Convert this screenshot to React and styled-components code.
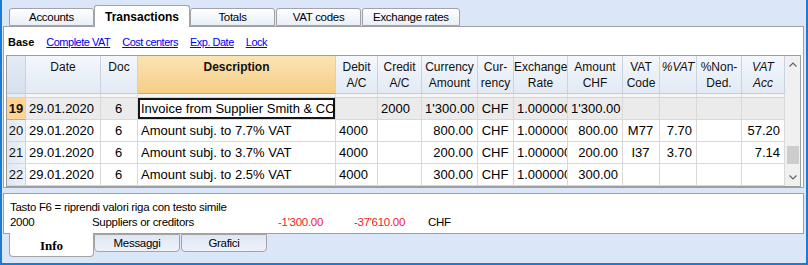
import React from 'react';
import styled, { createGlobalStyle } from 'styled-components';

const GlobalStyle = createGlobalStyle`
  html, body { margin: 0; padding: 0; background: #dbe6f8; }
  body { font-family: "Liberation Sans", Arial, sans-serif; }
  * { box-sizing: border-box; }
`;

const COLS = [19, 75, 37, 198, 42, 44, 56, 36, 54, 55, 37, 37, 45, 43];
const TEMPLATE = COLS.map((w) => `${w}px`).join(' ');

const HEADERS = [
  { lines: [''] },
  { lines: ['Date'] },
  { lines: ['Doc'] },
  { lines: ['Description'], accent: true },
  { lines: ['Debit', 'A/C'] },
  { lines: ['Credit', 'A/C'] },
  { lines: ['Currency', 'Amount'] },
  { lines: ['Cur-', 'rency'] },
  { lines: ['Exchange', 'Rate'] },
  { lines: ['Amount', 'CHF'] },
  { lines: ['VAT', 'Code'] },
  { lines: ['%VAT'], italic: true },
  { lines: ['%Non-', 'Ded.'] },
  { lines: ['VAT', 'Acc', 'CHF'], italic: true },
];

const FIELDS = [
  { key: 'date', align: 'left' },
  { key: 'doc', align: 'center' },
  { key: 'desc', align: 'left' },
  { key: 'debit', align: 'left' },
  { key: 'credit', align: 'left' },
  { key: 'curAmt', align: 'right' },
  { key: 'cur', align: 'center' },
  { key: 'rate', align: 'left' },
  { key: 'chf', align: 'right' },
  { key: 'code', align: 'center' },
  { key: 'pct', align: 'right' },
  { key: 'nonDed', align: 'right' },
  { key: 'acc', align: 'right' },
];

const ROWS = [
  { n: 19, current: true, date: '29.01.2020', doc: '6', desc: 'Invoice from Supplier Smith & CO', debit: '', credit: '2000', curAmt: "1'300.00", cur: 'CHF', rate: '1.000000', chf: "1'300.00", code: '', pct: '', nonDed: '', acc: '' },
  { n: 20, date: '29.01.2020', doc: '6', desc: 'Amount subj. to 7.7% VAT', debit: '4000', credit: '', curAmt: '800.00', cur: 'CHF', rate: '1.000000', chf: '800.00', code: 'M77', pct: '7.70', nonDed: '', acc: '57.20' },
  { n: 21, date: '29.01.2020', doc: '6', desc: 'Amount subj. to 3.7% VAT', debit: '4000', credit: '', curAmt: '200.00', cur: 'CHF', rate: '1.000000', chf: '200.00', code: 'I37', pct: '3.70', nonDed: '', acc: '7.14' },
  { n: 22, date: '29.01.2020', doc: '6', desc: 'Amount subj. to 2.5% VAT', debit: '4000', credit: '', curAmt: '300.00', cur: 'CHF', rate: '1.000000', chf: '300.00', code: '', pct: '', nonDed: '', acc: '' },
];

const TABS = ['Accounts', 'Transactions', 'Totals', 'VAT codes', 'Exchange rates'];
const LINKS = ['Complete VAT', 'Cost centers', 'Exp. Date', 'Lock'];

const Frame = styled.div`
  width: 808px;
  height: 265px;
  background: #dbe6f8;
  border: 2px solid #1a7ad6;
  border-top: none;
  padding: 0 2px 0 1px;
  display: flex;
  flex-direction: column;
  overflow: hidden;
`;

const TabStrip = styled.div`
  height: 26px;
  display: flex;
  align-items: flex-end;
  gap: 1px;
  padding-left: 6px;
  position: relative;
  z-index: 1;
`;

const Tab = styled.div`
  min-width: ${(p) => (p.$active ? '87px' : '85px')};
  height: ${(p) => (p.$active ? '22px' : '18px')};
  margin: ${(p) => (p.$active ? '0 -1px -1px -1px' : '0')};
  padding: 0 10px;
  display: flex;
  align-items: center;
  justify-content: center;
  font-size: ${(p) => (p.$active ? '12px' : '11.5px')};
  font-weight: ${(p) => (p.$active ? 'bold' : 'normal')};
  letter-spacing: ${(p) => (p.$active ? '0' : '-0.3px')};
  color: #000;
  background: ${(p) => (p.$active ? '#ffffff' : 'linear-gradient(#fdfeff, #e9eff9)')};
  border: 1px solid #a3a3a3;
  border-bottom: ${(p) => (p.$active ? 'none' : '1px solid #a3a3a3')};
  border-radius: 3px 3px 0 0;
  white-space: nowrap;
`;

const Panel = styled.div`
  height: 162px;
  background: #fff;
  border: 1px solid #a0a0a0;
  padding: 0 2px;
  display: flex;
  flex-direction: column;
`;

const Toolbar = styled.div`
  height: 28px;
  display: flex;
  align-items: center;
  gap: 12px;
  padding: 2px 0 0 2px;
  font-size: 11px;
`;

const ToolLabel = styled.span`
  font-weight: bold;
  font-size: 11px;
  color: #000;
`;

const ToolLink = styled.a`
  color: #0000f0;
  text-decoration: underline;
  letter-spacing: -0.5px;
  cursor: pointer;
`;

const Grid = styled.div`
  height: 132px;
  border: 1px solid #9c9c9c;
  display: flex;
  overflow: hidden;
`;

const GridBody = styled.div`
  width: 778px;
  display: flex;
  flex-direction: column;
`;

const Row = styled.div`
  display: grid;
  grid-template-columns: ${TEMPLATE};
  height: ${(p) => p.$height}px;
  flex: none;
`;

const HeadCell = styled.div`
  height: 38px;
  padding-top: 3px;
  text-align: center;
  font-size: 12px;
  line-height: 16px;
  color: #111;
  font-weight: ${(p) => (p.$accent ? 'bold' : 'normal')};
  font-style: ${(p) => (p.$italic ? 'italic' : 'normal')};
  background: ${(p) => (p.$accent ? 'linear-gradient(#fbe4b4, #f6cd86)' : 'linear-gradient(#f4f7fc, #e3eaf4)')};
  border-right: 1px solid #c8d2e0;
  border-bottom: 1px solid ${(p) => (p.$accent ? '#f0a23e' : '#c0cbdb')};
  overflow: hidden;
  white-space: nowrap;
`;

const CornerCell = styled(HeadCell)`
  background: linear-gradient(#e4ebf6, #d6e0ef);
`;

const StripCell = styled.div`
  background: ${(p) => (p.$head ? '#e6ecf6' : '#f6f6f6')};
  border-right: 1px solid ${(p) => (p.$head ? '#c8d2e0' : '#dcdcdc')};
  border-bottom: 1px solid #d4d4d4;
`;

const RowHead = styled.div`
  font-size: 13px;
  line-height: 21px;
  text-align: center;
  font-weight: ${(p) => (p.$current ? 'bold' : 'normal')};
  color: #111;
  background: ${(p) => (p.$current ? '#ffd392' : 'linear-gradient(90deg, #dfe7f3, #edf2f9)')};
  border-right: 1px solid #c8d2e0;
  border-bottom: 1px solid ${(p) => (p.$current ? '#f0a23e' : '#d0d8e4')};
`;

const Cell = styled.div`
  font-size: 13px;
  line-height: 21px;
  color: #000;
  text-align: ${(p) => p.$align};
  padding: 0 4px 0 3px;
  white-space: nowrap;
  overflow: hidden;
  background: ${(p) => (p.$selected && !p.$focus ? '#ebebeb' : '#fff')};
  border-right: 1px solid #d9d9d9;
  border-bottom: 1px solid #d9d9d9;
  box-shadow: ${(p) => (p.$focus ? 'inset 0 0 0 2px #151515' : 'none')};
`;

const Scrollbar = styled.div`
  width: 15px;
  background: #f0f0f0;
  display: flex;
  flex-direction: column;
`;

const ScrollBtn = styled.div`
  height: 17px;
  display: flex;
  align-items: center;
  justify-content: center;
`;

const Track = styled.div`
  flex: 1;
`;

const Thumb = styled.div`
  height: 18px;
  margin: ${(p) => p.$offset}px 1px 0 2px;
  background: #cdcdcd;
`;

const InfoPanel = styled.div`
  height: 41px;
  margin-top: 5px;
  background: #fff;
  border: 1px solid #a0a0a0;
  padding: 6px 0 0 6px;
  font-size: 11.5px;
  line-height: 15px;
  letter-spacing: -0.3px;
  color: #000;
`;

const InfoLine = styled.div`
  display: grid;
  grid-template-columns: 82px 150px 81px 82px auto;
  white-space: nowrap;
`;

const Amount = styled.span`
  text-align: right;
  color: ${(p) => (p.$negative ? '#f21c24' : '#000')};
`;

const Currency = styled.span`
  padding-left: 23px;
`;

const BottomTabs = styled.div`
  display: flex;
  align-items: flex-start;
  gap: 1px;
  padding-left: 6px;
`;

const BottomTab = styled.div`
  width: ${(p) => (p.$active ? '85px' : '86px')};
  height: ${(p) => (p.$active ? '24px' : '18px')};
  margin-top: ${(p) => (p.$active ? '-1px' : '0')};
  margin-right: ${(p) => (p.$active ? '-1px' : '0')};
  display: flex;
  align-items: center;
  justify-content: center;
  font-family: ${(p) => (p.$active ? '"Liberation Serif", "Times New Roman", serif' : '"Liberation Sans", Arial, sans-serif')};
  font-size: ${(p) => (p.$active ? '13px' : '11.5px')};
  font-weight: ${(p) => (p.$active ? 'bold' : 'normal')};
  letter-spacing: ${(p) => (p.$active ? '0' : '-0.3px')};
  padding-top: ${(p) => (p.$active ? '2px' : '0')};
  color: #000;
  background: ${(p) => (p.$active ? '#fff' : 'linear-gradient(#dfe7f4, #eef2fa)')};
  border: 1px solid #a3a3a3;
  border-top: ${(p) => (p.$active ? 'none' : '1px solid #a3a3a3')};
  border-radius: 0 0 4px 4px;
`;

function Chevron({ up }) {
  return (
    <svg width="8" height="5" viewBox="0 0 8 5">
      <polyline
        points={up ? '0.5,4.5 4,1 7.5,4.5' : '0.5,0.5 4,4 7.5,0.5'}
        fill="none"
        stroke="#606060"
        strokeWidth="1.1"
      />
    </svg>
  );
}

function TransactionsGrid() {
  return (
    <Grid>
      <GridBody>
        <Row $height={38}>
          {HEADERS.map((h, i) => {
            const C = i === 0 ? CornerCell : HeadCell;
            return (
              <C key={i} $accent={h.accent} $italic={h.italic}>
                {h.lines.map((l, j) => (
                  <div key={j}>{l}</div>
                ))}
              </C>
            );
          })}
        </Row>
        <Row $height={4}>
          {COLS.map((_, i) => (
            <StripCell key={i} $head={i === 0} />
          ))}
        </Row>
        {ROWS.map((r) => (
          <Row key={r.n} $height={22}>
            <RowHead $current={r.current}>{r.n}</RowHead>
            {FIELDS.map((f) => (
              <Cell
                key={f.key}
                $align={f.align}
                $selected={r.current}
                $focus={r.current && f.key === 'desc'}
              >
                {r[f.key]}
              </Cell>
            ))}
          </Row>
        ))}
      </GridBody>
      <Scrollbar>
        <ScrollBtn>
          <Chevron up />
        </ScrollBtn>
        <Track>
          <Thumb $offset={73} />
        </Track>
        <ScrollBtn>
          <Chevron />
        </ScrollBtn>
      </Scrollbar>
    </Grid>
  );
}

export default function App() {
  return (
    <>
      <GlobalStyle />
      <Frame>
        <TabStrip>
          {TABS.map((t) => (
            <Tab key={t} $active={t === 'Transactions'}>
              {t}
            </Tab>
          ))}
        </TabStrip>
        <Panel>
          <Toolbar>
            <ToolLabel>Base</ToolLabel>
            {LINKS.map((l) => (
              <ToolLink key={l}>{l}</ToolLink>
            ))}
          </Toolbar>
          <TransactionsGrid />
        </Panel>
        <InfoPanel>
          <div>Tasto F6 = riprendi valori riga con testo simile</div>
          <InfoLine>
            <span>2000</span>
            <span>Suppliers or creditors</span>
            <Amount $negative>-1'300.00</Amount>
            <Amount $negative>-37'610.00</Amount>
            <Currency>CHF</Currency>
          </InfoLine>
        </InfoPanel>
        <BottomTabs>
          <BottomTab $active>Info</BottomTab>
          <BottomTab>Messaggi</BottomTab>
          <BottomTab>Grafici</BottomTab>
        </BottomTabs>
      </Frame>
    </>
  );
}
